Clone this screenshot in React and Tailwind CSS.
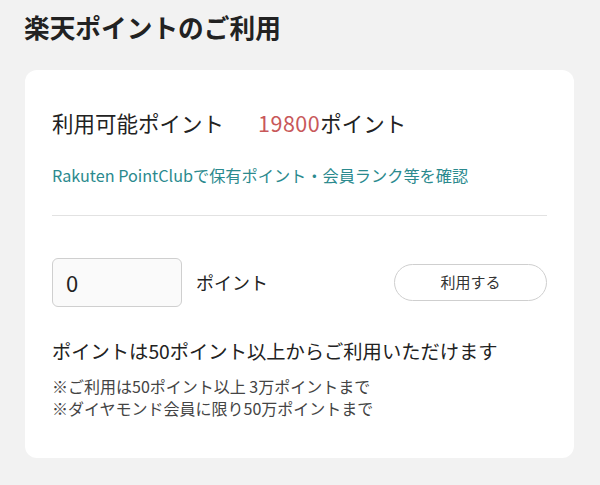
export default function App() {
  const font = { fontFamily: '"Noto Sans CJK JP", "Noto Sans", sans-serif' };
  return (
    <div className="w-[600px] h-[485px] bg-[#f2f2f2] text-[#222]" style={font}>
      <div className="pl-[24px] pt-[9px] h-[70px]">
        <h1 className="text-[25.7px] font-bold leading-[36px]">楽天ポイントのご利用</h1>
      </div>
      <div className="ml-[25px] w-[549px] h-[388px] bg-white rounded-[12px] px-[27px] pt-[37px]">
        <div className="flex items-center text-[21.5px] leading-[32px]">
          <span>利用可能ポイント</span>
          <span className="ml-[34px] text-[#c8585a] tracking-[0.5px]">19800</span>
          <span>ポイント</span>
        </div>
        <div className="mt-[24px] text-[16.2px] leading-[24px] text-[#2b8a8e]">
          Rakuten PointClubで保有ポイント・会員ランク等を確認
        </div>
        <div className="mt-[28px] h-px bg-[#e2e2e2]" />
        <div className="mt-[42px] flex items-center">
          <div className="w-[130px] h-[49px] border border-[#cfcfcf] rounded-[6px] bg-[#fafafa] flex items-center px-[13px] text-[22px]">0</div>
          <span className="ml-[14px] text-[18px]">ポイント</span>
          <button className="ml-auto w-[153px] h-[37px] rounded-full border border-[#cfcfcf] text-[15px] text-[#333] bg-white">利用する</button>
        </div>
        <div className="mt-[30px] text-[19.3px] leading-[28px]">ポイントは50ポイント以上からご利用いただけます</div>
        <div className="mt-[10px] text-[16px] leading-[22px] text-[#444]">
          <div>※ご利用は50ポイント以上 3万ポイントまで</div>
          <div>※ダイヤモンド会員に限り50万ポイントまで</div>
        </div>
      </div>
    </div>
  );
}
